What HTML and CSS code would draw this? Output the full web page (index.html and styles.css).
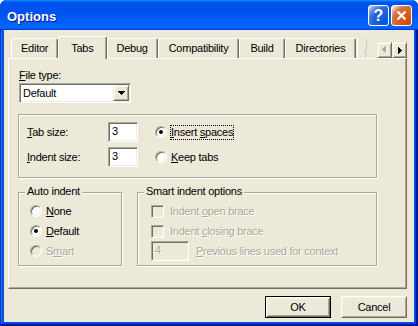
FILE: index.html
```html
<!DOCTYPE html>
<html lang="en">
<head>
    <meta charset="UTF-8">
    <meta name="viewport" content="width=device-width, initial-scale=1.0">
    <title>Options</title>
    <link rel="stylesheet" href="styles.css">
</head>
<body>
<div class="window">
    <div class="titlebar">
        <span class="title">Options</span>
        <span class="cap-btn help">?</span>
        <span class="cap-btn close">
            <svg width="19" height="19" viewBox="0 0 19 19"><path d="M5.5 5.5L13.5 13.5M13.5 5.5L5.5 13.5" stroke="#fff" stroke-width="2.2" fill="none"/></svg>
        </span>
    </div>

    <div class="client">
        <!-- tab strip -->
        <div class="tabs">
            <span class="tab tab-narrow">Editor</span>
            <span class="tab tab-active">Tabs</span>
            <span class="tab tab-narrow">Debug</span>
            <span class="tab">Compatibility</span>
            <span class="tab">Build</span>
            <span class="tab">Directories</span>
            <span class="tab-cut">
                <svg width="11" height="20" viewBox="0 0 11 20"><polyline points="8,1 9,4 8,7 9,10 7,13 8,16 7,20" stroke="#c9c6b8" fill="none"/></svg>
            </span>
            <span class="spin">
                <span class="spin-btn">
                    <svg width="5" height="8" viewBox="0 0 5 8"><path d="M5 1h-1v1h-1v1h-1v1h-1v1h1v1h1v1h1v1h1z" fill="#fff"/><path d="M4 0h-1v1h-1v1h-1v1h-1v1h1v1h1v1h1v1h1z" fill="#aca899"/></svg>
                </span>
                <span class="spin-btn">
                    <svg width="4" height="7" viewBox="0 0 4 7"><path d="M0 0h1v1h1v1h1v1h1v1h-1v1h-1v1h-1v1h-1z" fill="#000"/></svg>
                </span>
            </span>
        </div>

        <!-- tab page -->
        <div class="page">
            <div class="label"><u>F</u>ile type:</div>
            <div class="combo">
                <span class="combo-text">Default</span>
                <span class="combo-btn">
                    <svg width="7" height="4" viewBox="0 0 7 4"><path d="M0 0h7v1h-1v1h-1v1h-1v1h-1v-1h-1v-1h-1v-1h-1z" fill="#000"/></svg>
                </span>
            </div>

            <div class="group size-group">
                <span class="field-label"><u>T</u>ab size:</span>
                <span class="edit">3</span>
                <span class="option radio-cell">
                    <span class="radio checked"></span>
                    <span class="focus"><u>I</u>nsert <u>s</u>paces</span>
                </span>
                <span class="field-label"><u>I</u>ndent size:</span>
                <span class="edit">3</span>
                <span class="option radio-cell">
                    <span class="radio"></span>
                    <span class="nofocus"><u>K</u>eep tabs</span>
                </span>
            </div>

            <div class="group-row">
                <div class="group auto-group">
                    <span class="legend">Auto indent</span>
                    <div class="rows">
                        <div class="option">
                            <span class="radio"></span>
                            <span><u>N</u>one</span>
                        </div>
                        <div class="option">
                            <span class="radio checked"></span>
                            <span><u>D</u>efault</span>
                        </div>
                        <div class="option disabled">
                            <span class="radio"></span>
                            <span>S<u>m</u>art</span>
                        </div>
                    </div>
                </div>
                <div class="group smart-group">
                    <span class="legend">Smart indent options</span>
                    <div class="rows">
                        <div class="option disabled">
                            <span class="check"></span>
                            <span>Indent <u>o</u>pen brace</span>
                        </div>
                        <div class="option disabled">
                            <span class="check"></span>
                            <span>Indent <u>c</u>losing brace</span>
                        </div>
                        <div class="option disabled">
                            <span class="edit edit-wide">4</span>
                            <span><u>P</u>revious lines used for context</span>
                        </div>
                    </div>
                </div>
            </div>
        </div>

        <div class="buttons">
            <span class="btn btn-default">OK</span>
            <span class="btn">Cancel</span>
        </div>
    </div>
</div>
</body>
</html>
```

FILE: styles.css
```css
body {
    margin: 0;
    background: #ffffff;
    font-family: "Liberation Sans", Arial, sans-serif;
    font-size: 11px;
    line-height: 13px;
    letter-spacing: -0.25px;
    color: #000000;
}
u {
    text-underline-offset: 1px;
}

/* window frame */
.window {
    width: 418px;
    height: 326px;
    box-sizing: border-box;
    display: flex;
    flex-direction: column;
    padding-bottom: 4px;
    background: #0855dd;
    border-radius: 7px 7px 0 0;
    box-shadow: inset -1px -1px #00138c, inset 1px 1px #0831d9, inset -2px -2px #001ea0, inset 2px 2px #166aee, inset -3px -3px #003bda, inset 3px 3px #0855dd;
}
.titlebar {
    flex: none;
    height: 30px;
    display: flex;
    align-items: center;
    padding: 0 6px 0 7px;
    border-radius: 7px 7px 0 0;
    background: linear-gradient(180deg, #0997ff, #0053ee 8%, #0050ee 40%, #0066ff 88%, #0066ff 93%, #005bff 95%, #003dd7 96%, #003dd7);
}
.title {
    flex: 1;
    margin-top: 3px;
    color: #ffffff;
    font-size: 13px;
    font-weight: bold;
    letter-spacing: 0;
    text-shadow: 1px 1px #0f1089;
}
.cap-btn {
    width: 21px;
    height: 21px;
    box-sizing: border-box;
    margin-left: 2px;
    border: 1px solid #ffffff;
    border-radius: 3px;
    display: flex;
    align-items: center;
    justify-content: center;
}
.help {
    background: radial-gradient(circle at 90% 90%, #0054e9 0%, #2263d5 55%, #4479e4 70%, #a3bbec 90%, #ffffff 100%);
    color: #ffffff;
    font-size: 16px;
    font-weight: bold;
    letter-spacing: 0;
}
.close {
    background: radial-gradient(circle at 90% 90%, #cc4600 0%, #dc6527 55%, #cd7546 70%, #ffccb2 90%, #ffffff 100%);
}

.client {
    flex: 1;
    margin: 0 4px;
    padding: 0 7px 0 4px;
    background: #ece9d8;
    display: flex;
    flex-direction: column;
}

/* tabs */
.tabs {
    display: flex;
    align-items: flex-end;
    height: 22px;
    margin-top: 6px;
    padding-left: 3px;
}
.tab {
    flex: none;
    height: 20px;
    box-sizing: border-box;
    display: flex;
    align-items: center;
    padding: 0 10px;
    border-top: 1px solid #ffffff;
    border-left: 1px solid #ffffff;
    border-right: 1px solid #716f64;
    border-radius: 2px 2px 0 0;
    box-shadow: inset -1px 0 #aca899;
}
.tab-narrow {
    padding: 0 9px;
}
.tab-active {
    height: 23px;
    margin-bottom: -1px;
    padding: 0 12px;
    background: #ece9d8;
    position: relative;
    z-index: 1;
}
.tab-cut {
    flex: none;
    height: 20px;
    margin-left: 1px;
    border-left: 1px solid #ffffff;
    display: flex;
}
.spin {
    margin-left: auto;
    display: flex;
    height: 16px;
}
.spin-btn {
    width: 15px;
    height: 16px;
    box-sizing: border-box;
    display: flex;
    align-items: center;
    justify-content: center;
    border: 1px solid;
    border-color: #f1efe2 #716f64 #716f64 #f1efe2;
    box-shadow: inset 1px 1px #ffffff, inset -1px -1px #aca899;
}

/* tab page */
.page {
    height: 231px;
    box-sizing: border-box;
    padding: 10px 0 0 9px;
    border: 1px solid;
    border-color: #ffffff #716f64 #716f64 #ffffff;
    box-shadow: inset -1px -1px #aca899;
}
.label {
    margin-left: 1px;
}
.combo {
    width: 112px;
    height: 20px;
    box-sizing: border-box;
    margin: 1px 0 0 1px;
    padding: 1px;
    display: flex;
    border: 1px solid;
    border-color: #aca899 #ffffff #ffffff #aca899;
    box-shadow: inset 1px 1px #716f64, inset -1px -1px #f1efe2;
    background: #ffffff;
}
.combo-text {
    flex: 1;
    padding: 2px 0 0 2px;
}
.combo-btn {
    width: 16px;
    height: 16px;
    box-sizing: border-box;
    display: flex;
    align-items: center;
    justify-content: center;
    background: #ece9d8;
    border: 1px solid;
    border-color: #f1efe2 #716f64 #716f64 #f1efe2;
    box-shadow: inset 1px 1px #ffffff, inset -1px -1px #aca899;
}

/* etched group boxes */
.group {
    box-sizing: border-box;
    border: 1px solid #aca899;
    box-shadow: 1px 1px #ffffff, inset 1px 1px #ffffff;
}
.size-group {
    width: 359px;
    height: 64px;
    margin-top: 11px;
    padding: 7px 0 0 8px;
    display: grid;
    grid-template-columns: 81px 30px auto;
    grid-template-rows: 20px 20px;
    row-gap: 5px;
    align-items: center;
}
.edit {
    width: 30px;
    height: 20px;
    box-sizing: border-box;
    padding: 2px 0 0 3px;
    border: 1px solid;
    border-color: #aca899 #ffffff #ffffff #aca899;
    box-shadow: inset 1px 1px #716f64, inset -1px -1px #f1efe2;
    background: #ffffff;
}
.radio-cell {
    margin-left: 17px;
}
.option {
    display: flex;
    align-items: center;
    height: 20px;
}
.radio {
    width: 12px;
    height: 12px;
    box-sizing: border-box;
    margin-right: 3px;
    flex: none;
    border: 1px solid;
    border-color: #aca899 #ffffff #ffffff #aca899;
    border-radius: 50%;
    box-shadow: inset 1px 1px #716f64, inset -1px -1px #f1efe2;
    background: #ffffff;
    display: flex;
    align-items: center;
    justify-content: center;
}
.radio.checked::after {
    content: "";
    width: 4px;
    height: 4px;
    border-radius: 50%;
    background: #000000;
}
.focus {
    border: 1px dotted #000000;
}
.nofocus {
    border: 1px solid transparent;
}

.group-row {
    display: flex;
    gap: 15px;
    margin-top: 14px;
}
.auto-group,
.smart-group {
    height: 74px;
}
.auto-group {
    width: 104px;
    padding-left: 11px;
}
.smart-group {
    width: 240px;
    padding-left: 13px;
}
.legend {
    display: block;
    width: fit-content;
    margin: -8px 0 0 -5px;
    padding: 0 2px;
    background: #ece9d8;
}
.smart-group .legend {
    margin-left: -7px;
}
.rows {
    margin-top: 3px;
}
.auto-group .radio {
    margin-right: 4px;
}
.check {
    width: 13px;
    height: 13px;
    box-sizing: border-box;
    margin-right: 6px;
    flex: none;
    border: 1px solid;
    border-color: #aca899 #ffffff #ffffff #aca899;
    box-shadow: inset 1px 1px #716f64, inset -1px -1px #f1efe2;
    background: #ece9d8;
}
.edit-wide {
    width: 38px;
    margin-right: 7px;
    background: #ece9d8;
}
.disabled {
    color: #aca899;
    text-shadow: 1px 1px #ffffff;
}
.disabled .radio {
    background: #ece9d8;
}

/* dialog buttons */
.buttons {
    display: flex;
    justify-content: flex-end;
    gap: 10px;
    margin-top: 7px;
}
.btn {
    width: 66px;
    height: 22px;
    box-sizing: border-box;
    display: flex;
    align-items: center;
    justify-content: center;
    border: 1px solid;
    border-color: #ffffff #716f64 #716f64 #ffffff;
    box-shadow: inset 1px 1px #f1efe2, inset -1px -1px #aca899;
}
.btn-default {
    border-color: #000000;
    box-shadow: inset 1px 1px #ffffff, inset -1px -1px #716f64, inset 2px 2px #f1efe2, inset -2px -2px #aca899;
}
```
